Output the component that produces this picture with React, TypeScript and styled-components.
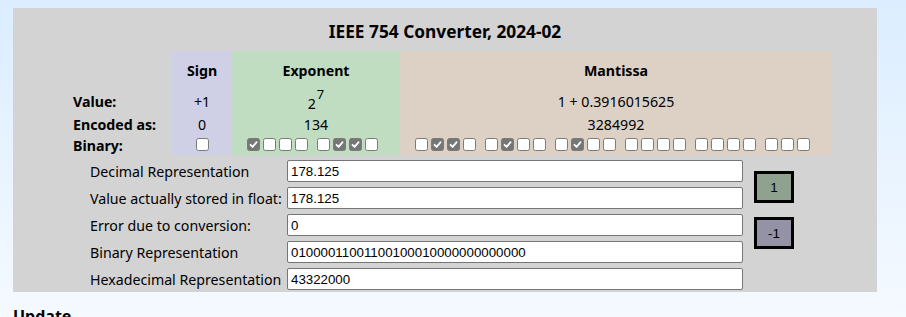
import styled, { createGlobalStyle } from "styled-components";

const GlobalStyle = createGlobalStyle`
  html {
    min-height: 100%;
    background: linear-gradient(to bottom, #dbedff 0%, #f6faff 100%);
  }
  body {
    margin: 0;
    padding: 8px 29px 0 13px;
    font-family: "Noto Sans", "Open Sans", sans-serif;
    color: #000;
  }
`;

const Panel = styled.div`
  width: 864px;
  height: 284px;
  box-sizing: border-box;
  background: #d3d3d3;
  padding-top: 12px;
`;

const Title = styled.h1`
  margin: 0 0 7px;
  font-size: 17.3px;
  line-height: 24px;
  font-weight: 700;
  text-align: center;
`;

const BitTable = styled.div`
  display: grid;
  grid-template-columns: 100px 60px 168px 432px;
  grid-template-rows: 38px 24px 23px 19px;
  margin-left: 59px;
  font-size: 14.2px;
`;

const colours: Record<string, string> = {
  none: "transparent",
  sign: "#cfd0e6",
  exponent: "#c1ddc1",
  mantissa: "#ddd1c5",
};

const Cell = styled.div<{ $part: string; $bold?: boolean; $left?: boolean }>`
  background: ${(p) => colours[p.$part]};
  display: flex;
  align-items: center;
  justify-content: ${(p) => (p.$left ? "flex-start" : "center")};
  font-weight: ${(p) => (p.$bold ? 700 : 400)};
  padding-left: ${(p) => (p.$left ? "1px" : "0")};
  white-space: nowrap;
`;

const Power = styled.span`
  display: inline-flex;
  align-items: flex-start;
  padding-top: 5px;
`;

const Sup = styled.span`
  font-size: 13px;
  line-height: 1;
  margin-top: -6px;
  margin-left: 1px;
`;

const Bits = styled.div<{ $trail: boolean }>`
  display: flex;
  gap: 9px;
  padding-bottom: 2px;
  margin-right: ${(p) => (p.$trail ? "8px" : "0")};
`;

const Group = styled.div`
  display: flex;
  gap: 3px;
`;

const Box = styled.span<{ $on: boolean }>`
  width: 13px;
  height: 13px;
  box-sizing: border-box;
  border-radius: 2.5px;
  border: 1px solid #7a7a7a;
  background: ${(p) => (p.$on ? "#767676" : "#fff")};
  display: flex;
  align-items: center;
  justify-content: center;
`;

const Form = styled.div`
  display: flex;
  gap: 11px;
  margin: 5px 0 0 77px;
`;

const Rows = styled.div`
  display: flex;
  flex-direction: column;
  gap: 5px;
`;

const Row = styled.div`
  display: grid;
  grid-template-columns: 197px 456px;
  align-items: center;
  height: 22px;
`;

const Label = styled.span`
  font-size: 14.2px;
  white-space: nowrap;
`;

const Field = styled.input`
  width: 456px;
  height: 22px;
  box-sizing: border-box;
  border: 1px solid #767676;
  border-radius: 2px;
  padding: 1px 3px 0;
  font-family: "Liberation Sans", Arial, sans-serif;
  font-size: 13.3px;
  color: #000;
  background: #fff;
  outline: none;
`;

const Buttons = styled.div`
  display: flex;
  flex-direction: column;
  gap: 14px;
  padding-top: 11px;
`;

const StepButton = styled.button<{ $bg: string }>`
  width: 40px;
  height: 32px;
  box-sizing: border-box;
  border: 3px solid #000;
  background: ${(p) => p.$bg};
  font-family: "Liberation Sans", Arial, sans-serif;
  font-size: 13.5px;
  color: #000;
  padding: 0;
`;

const Update = styled.h3`
  margin: 13px 0 0;
  font-size: 16px;
  font-weight: 700;
`;

const Check = () => (
  <svg width="9" height="9" viewBox="0 0 9 9">
    <polyline
      points="1.5,4.8 3.6,6.8 7.6,2.2"
      fill="none"
      stroke="#fff"
      strokeWidth="1.8"
      strokeLinecap="round"
      strokeLinejoin="round"
    />
  </svg>
);

const BitGroups = ({ bits }: { bits: string }) => {
  const groups: string[] = [];
  for (let i = 0; i < bits.length; i += 4) groups.push(bits.slice(i, i + 4));
  return (
    <Bits $trail={groups.length > 1}>
      {groups.map((g, gi) => (
        <Group key={gi}>
          {g.split("").map((b, bi) => (
            <Box key={bi} $on={b === "1"}>
              {b === "1" && <Check />}
            </Box>
          ))}
        </Group>
      ))}
    </Bits>
  );
};

const fields = [
  ["Decimal Representation", "178.125"],
  ["Value actually stored in float:", "178.125"],
  ["Error due to conversion:", "0"],
  ["Binary Representation", "01000011001100100010000000000000"],
  ["Hexadecimal Representation", "43322000"],
];

export default function App() {
  return (
    <>
      <GlobalStyle />
      <Panel>
        <Title>IEEE 754 Converter, 2024-02</Title>
        <BitTable>
          <Cell $part="none" />
          <Cell $part="sign" $bold>Sign</Cell>
          <Cell $part="exponent" $bold>Exponent</Cell>
          <Cell $part="mantissa" $bold>Mantissa</Cell>

          <Cell $part="none" $bold $left>Value:</Cell>
          <Cell $part="sign">+1</Cell>
          <Cell $part="exponent">
            <Power>
              2<Sup>7</Sup>
            </Power>
          </Cell>
          <Cell $part="mantissa">1 + 0.3916015625</Cell>

          <Cell $part="none" $bold $left>Encoded as:</Cell>
          <Cell $part="sign">0</Cell>
          <Cell $part="exponent">134</Cell>
          <Cell $part="mantissa">3284992</Cell>

          <Cell $part="none" $bold $left>Binary:</Cell>
          <Cell $part="sign">
            <BitGroups bits="0" />
          </Cell>
          <Cell $part="exponent">
            <BitGroups bits="10000110" />
          </Cell>
          <Cell $part="mantissa">
            <BitGroups bits="01100100010000000000000" />
          </Cell>
        </BitTable>
        <Form>
          <Rows>
            {fields.map(([label, value]) => (
              <Row key={label}>
                <Label>{label}</Label>
                <Field type="text" defaultValue={value} />
              </Row>
            ))}
          </Rows>
          <Buttons>
            <StepButton $bg="#8fa18f">1</StepButton>
            <StepButton $bg="#9393a5">-1</StepButton>
          </Buttons>
        </Form>
      </Panel>
      <Update>Update</Update>
    </>
  );
}
